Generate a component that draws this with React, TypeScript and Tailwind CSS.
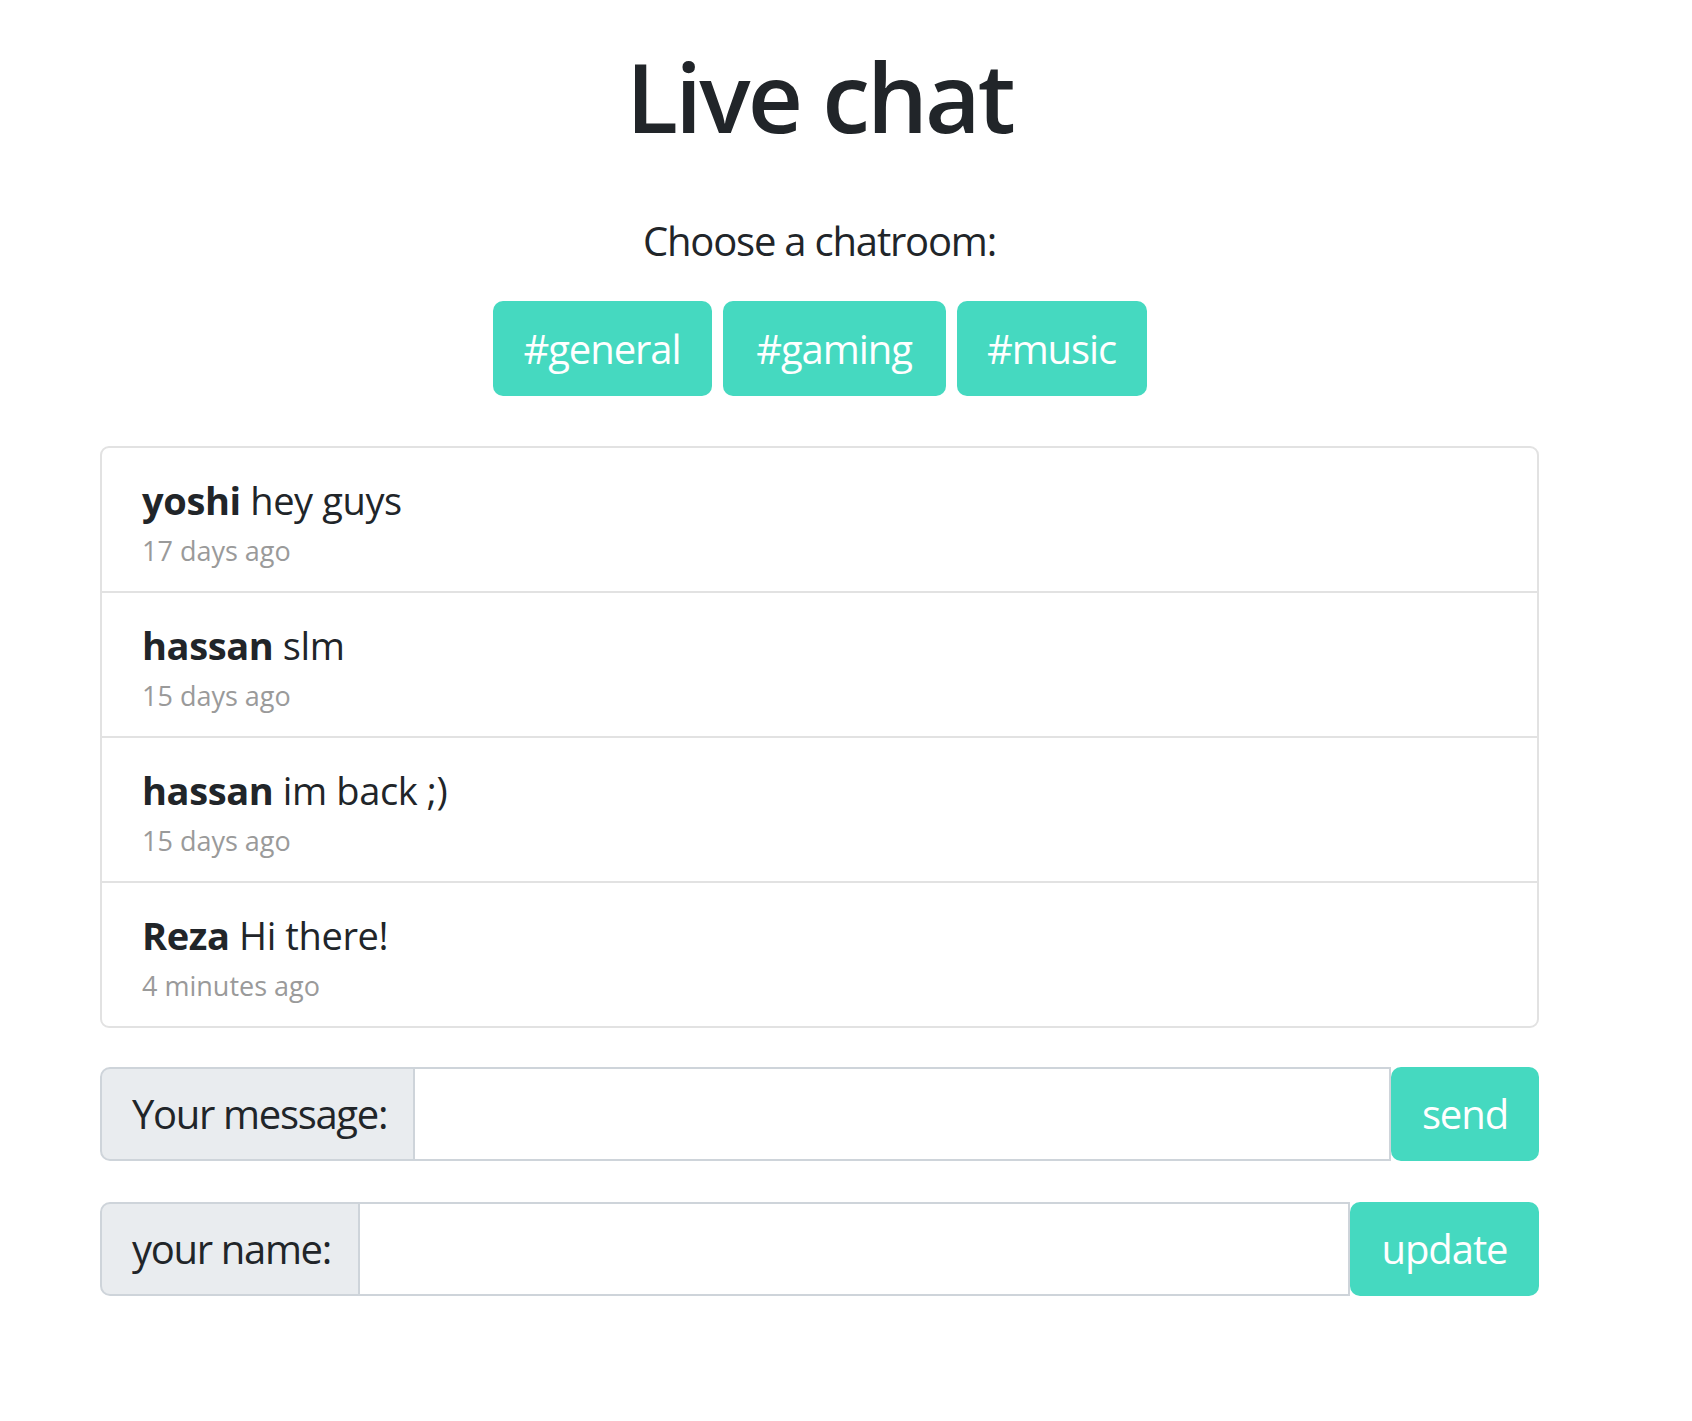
import React from "react";

const font = { fontFamily: '"Open Sans", "Noto Sans", sans-serif' };

const messages = [
  { name: "yoshi", text: "hey guys", time: "17 days ago" },
  { name: "hassan", text: "slm", time: "15 days ago" },
  { name: "hassan", text: "im back ;)", time: "15 days ago" },
  { name: "Reza", text: "Hi there!", time: "4 minutes ago" },
];

export default function App() {
  return (
    <div className="min-h-[1421px] w-[1692px] bg-white text-[#212529]" style={font}>
      <div className="ml-[100px] flex w-[1439px] flex-col pt-[38px]">
        <h1 className="text-center text-[96px] font-semibold leading-[1.2] tracking-[-0.03em]">Live chat</h1>
        <p className="mt-[58px] text-center text-[40px] leading-[60px] tracking-[-0.03em]">Choose a chatroom:</p>
        <div className="mt-[30px] flex justify-center gap-[11px]">
          <button className="flex h-[95px] w-[219px] items-center justify-center rounded-[10px] bg-[#45d9c0] text-[40px] tracking-[-0.027em] text-white">
            #general
          </button>
          <button className="flex h-[95px] w-[223px] items-center justify-center rounded-[10px] bg-[#45d9c0] text-[40px] tracking-[-0.027em] text-white">
            #gaming
          </button>
          <button className="flex h-[95px] w-[190px] items-center justify-center rounded-[10px] bg-[#45d9c0] text-[40px] tracking-[-0.027em] text-white">
            #music
          </button>
        </div>

        <div className="mt-[50px] flex flex-col rounded-[9px] border-2 border-[#e2e2e2]">
          {messages.map((m, i) => (
            <div
              key={i}
              className={`px-[40px] pb-[21px] pt-[24px] ${i > 0 ? "border-t-2 border-[#e2e2e2]" : ""}`}
            >
              <div className="text-[38px] leading-[57px] tracking-[-0.01em]">
                <span className="font-bold">{m.name}</span> {m.text}
              </div>
              <div className="mt-[3px] text-[27px] leading-[38px] text-[#9a9a9a]">{m.time}</div>
            </div>
          ))}
        </div>

        <div className="mt-[39px] flex h-[94px]">
          <div className="flex w-[315px] items-center rounded-l-[10px] border-2 border-[#ced4da] bg-[#e9ecef] pl-[30px] text-[40px] tracking-[-0.033em]">
            Your message:
          </div>
          <div className="flex-1 border-2 border-l-0 border-[#ced4da] bg-white" />
          <button className="flex w-[148px] items-center justify-center rounded-[10px] bg-[#45d9c0] text-[40px] tracking-[-0.027em] text-white">
            send
          </button>
        </div>

        <div className="mt-[41px] flex h-[94px]">
          <div className="flex w-[260px] items-center rounded-l-[10px] border-2 border-[#ced4da] bg-[#e9ecef] pl-[30px] text-[40px] tracking-[-0.033em]">
            your name:
          </div>
          <div className="flex-1 border-2 border-l-0 border-[#ced4da] bg-white" />
          <button className="flex w-[189px] items-center justify-center rounded-[10px] bg-[#45d9c0] text-[40px] tracking-[-0.027em] text-white">
            update
          </button>
        </div>
      </div>
    </div>
  );
}
